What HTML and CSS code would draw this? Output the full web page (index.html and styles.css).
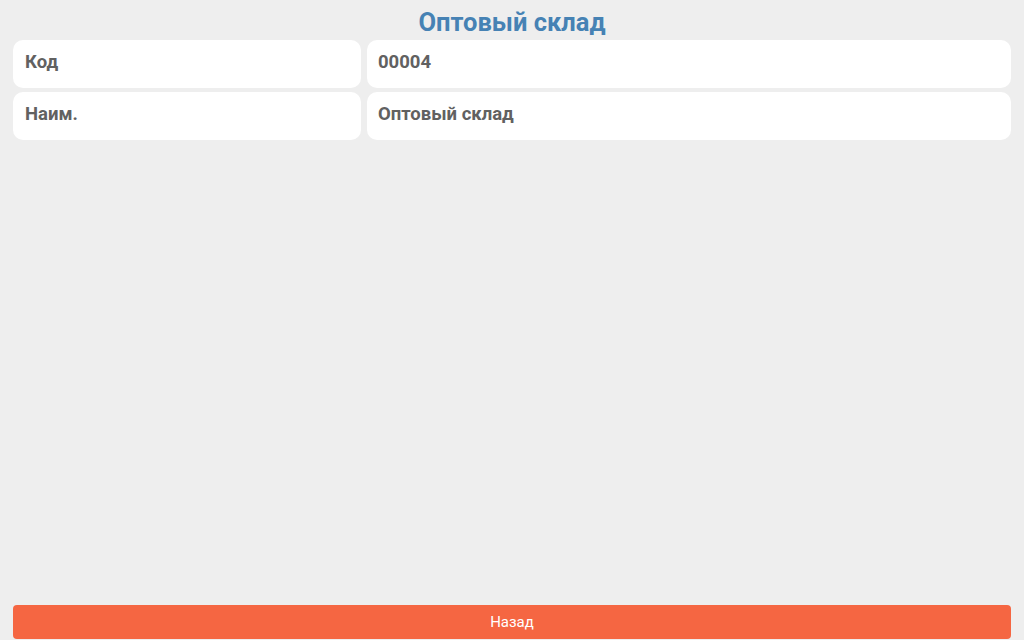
FILE: index.html
```html
<!DOCTYPE html>
<html lang="ru">
<head>
  <meta charset="UTF-8" />
  <meta name="viewport" content="width=device-width, initial-scale=1.0"/>
  <title>Оптовый склад</title>
  <link rel="stylesheet" href="styles.css">
</head>
<body>
  <div class="screen">
    <div class="title">Оптовый склад</div>

    <div class="fields">
      <div class="card label">Код</div>
      <div class="card value">00004</div>
      <div class="card label">Наим.</div>
      <div class="card value">Оптовый склад</div>
    </div>

    <button class="back">Назад</button>
  </div>
</body>
</html>
```

FILE: styles.css
```css
* {
  box-sizing: border-box;
  margin: 0;
  padding: 0;
  font-family: 'Roboto', 'Liberation Sans', sans-serif;
}

body {
  background-color: #eeeeee;
}

.screen {
  display: flex;
  flex-direction: column;
  height: 640px;
  padding: 0 13px 1px;
}

.title {
  height: 40px;
  line-height: 44px;
  text-align: center;
  font-size: 25.5px;
  font-weight: bold;
  color: #4682b4;
}

.fields {
  display: grid;
  grid-template-columns: 348px 1fr;
  column-gap: 6px;
  row-gap: 4px;
}

.card {
  height: 48px;
  background-color: #fff;
  border-radius: 10px;
  padding: 0 12px 4px;
  display: flex;
  align-items: center;
  font-size: 18.5px;
  font-weight: bold;
  color: #616161;
}

.card.value {
  padding-left: 11px;
}

.back {
  margin-top: auto;
  height: 34px;
  width: 100%;
  border: none;
  border-radius: 4px;
  background-color: #f56642;
  color: #fff;
  font-size: 15px;
  cursor: pointer;
}
```
